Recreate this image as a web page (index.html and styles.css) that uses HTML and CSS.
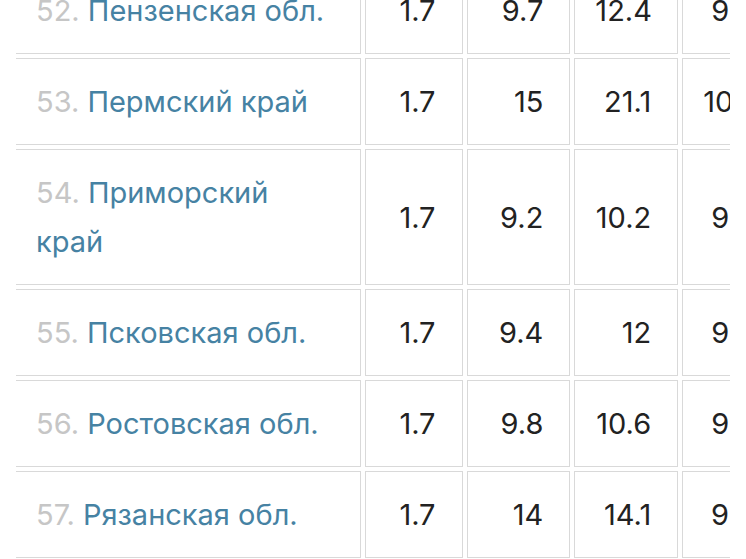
FILE: index.html
```html
<!DOCTYPE html>
<html lang="ru">
<head>
<meta charset="utf-8">
<title>Регионы</title>
<link rel="stylesheet" href="styles.css">
</head>
<body>
<div class="viewport">
  <table class="regions">
    <colgroup>
      <col class="c-name">
      <col class="c-a">
      <col class="c-b">
      <col class="c-b">
      <col class="c-e">
    </colgroup>
    <tbody>
      <tr>
        <td class="name"><span class="idx">52.</span> <span class="reg">Пензенская обл.</span></td>
        <td>1.7</td><td>9.7</td><td>12.4</td><td>9.6</td>
      </tr>
      <tr>
        <td class="name"><span class="idx">53.</span> <span class="reg">Пермский край</span></td>
        <td>1.7</td><td>15</td><td>21.1</td><td>10.3</td>
      </tr>
      <tr>
        <td class="name narrow"><span class="idx">54.</span> <span class="reg">Приморский край</span></td>
        <td>1.7</td><td>9.2</td><td>10.2</td><td>9.5</td>
      </tr>
      <tr>
        <td class="name"><span class="idx">55.</span> <span class="reg">Псковская обл.</span></td>
        <td>1.7</td><td>9.4</td><td>12</td><td>9.5</td>
      </tr>
      <tr>
        <td class="name"><span class="idx">56.</span> <span class="reg">Ростовская обл.</span></td>
        <td>1.7</td><td>9.8</td><td>10.6</td><td>9.3</td>
      </tr>
      <tr>
        <td class="name"><span class="idx">57.</span> <span class="reg">Рязанская обл.</span></td>
        <td>1.7</td><td>14</td><td>14.1</td><td>9.8</td>
      </tr>
    </tbody>
  </table>
</div>
</body>
</html>
```
FILE: styles.css
```css
html, body {
  margin: 0;
  padding: 0;
  background: #ffffff;
}

.viewport {
  width: 730px;
  height: 559px;
  overflow: hidden;
}

.regions {
  margin-top: -37px;
  margin-left: 12px;
  border-collapse: separate;
  border-spacing: 4px;
  table-layout: fixed;
  width: 773px;
  font-family: Inter, "Noto Sans", "Liberation Sans", sans-serif;
  font-size: 29px;
  line-height: 49px;
  color: #222222;
}

.c-name { width: 342px; }
.c-a { width: 97px; }
.c-b { width: 103px; }
.c-e { width: 98px; }

.regions td {
  border: 1px solid #d9d9d9;
  padding: 18px 26px 18px 20px;
  text-align: right;
  vertical-align: middle;
  white-space: nowrap;
}

.regions td.name {
  border-left: none;
  text-align: left;
  white-space: normal;
}

.regions td.narrow {
  padding-right: 80px;
}

.idx {
  color: #c6c6c6;
}

.reg {
  color: #4682a3;
}
```
